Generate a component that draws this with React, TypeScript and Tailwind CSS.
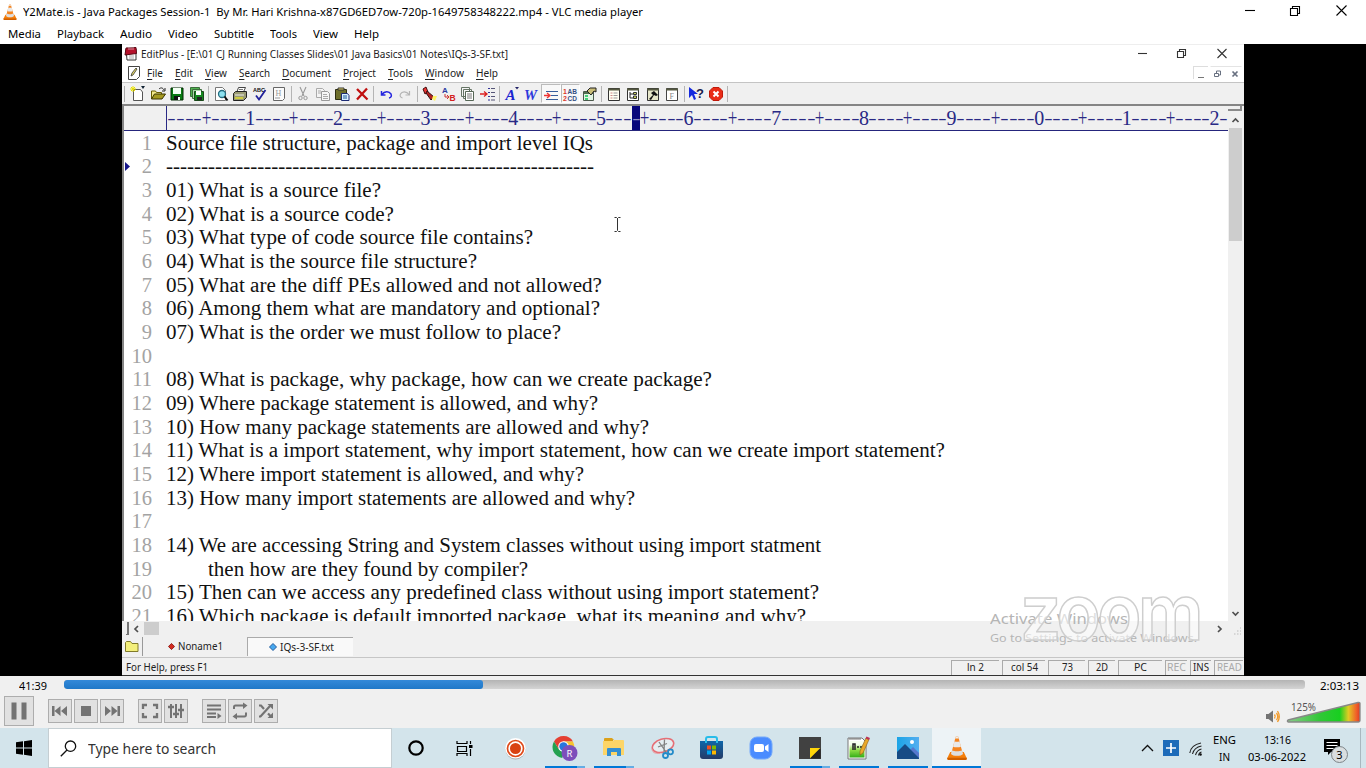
import React, { useLayoutEffect, useRef, useState } from 'react';

type Kids = { children?: React.ReactNode };

/* Single-line text condensed or expanded to a given width. */
function Fit({ w, className = '', children }: Kids & { w: number; className?: string }) {
  const ref = useRef<HTMLSpanElement>(null);
  const [scale, setScale] = useState(1);
  useLayoutEffect(() => {
    const el = ref.current;
    if (!el) return;
    el.style.transform = 'none';
    const natural = el.getBoundingClientRect().width;
    if (natural > 0) {
      setScale(w / natural);
      el.style.transform = `scaleX(${w / natural})`;
    }
  }, [w]);
  return (
    <span className={`block shrink-0 whitespace-pre ${className}`} style={{ width: w }}>
      <span ref={ref} className="inline-block origin-left" style={{ transform: `scaleX(${scale})` }}>
        {children}
      </span>
    </span>
  );
}

function Cone({ className }: { className: string }) {
  return (
    <svg viewBox="0 0 20 24" className={className}>
      <path d="M3.2 16h13.6l3 6.2c.2.8-.3 1.6-1.2 1.6H1.4C.5 23.800 0 23 .2 22.200z" fill="#f57f0a" />
      <path d="M.3 21.800h19.400v1.200c0 .5-.4.900-1 .9H1.400c-.6 0-1-.4-1-.9z" fill="#d05f00" />
      <path d="M8.700.8q1.300-.9 2.600 0L16 18.500c-2 2.400-10 2.400-12 0z" fill="#f48420" />
      <path d="M7.500 5.200l-1.500 5.200c2 1.200 6 1.200 8 0l-1.500-5.200c-1.400.7-3.600.7-5 0z" fill="#e9e9e9" />
      <path d="M4.900 14.200L4 17.900c2 2.600 10 2.600 12 0l-.9-3.700c-2.400 1.500-7.800 1.500-10.200 0z" fill="#dedede" />
      <path d="M8.700.8q1.300-.9 2.600 0l.5 1.700H8.200z" fill="#eee" />
    </svg>
  );
}

function WindowButtons({ small = false }: { small?: boolean }) {
  return (
    <svg width={small ? 92 : 104} height="13" viewBox={small ? '0 0 92 13' : '0 0 104 13'} fill="none" stroke={small ? '#333' : '#000'} strokeWidth="1.1" shapeRendering="geometricPrecision">
      <path d={small ? 'M1 6.500h9' : 'M1 6.500h10'} />
      {small ? (
        <>
          <path d="M40.500 4.500h6v6h-6zM42.500 4.500v-2h6v6h-2" />
          <path d="M80.500 2l9 9m0-9l-9 9" />
        </>
      ) : (
        <>
          <path d="M46.500 4.500h7v7h-7zM48.500 4.500v-2h7v7h-2" />
          <path d="M92.500 1.500l10 10m0-10l-10 10" />
        </>
      )}
    </svg>
  );
}

const menus: [string, number, number][] = [
  ['Media', 33, 8], ['Playback', 47, 16], ['Audio', 32, 16], ['Video', 30, 16],
  ['Subtitle', 40, 16], ['Tools', 27, 16], ['View', 25, 16], ['Help', 25, 16],
];

const editMenus: [string, number, number][] = [
  ['File', 16, 7], ['Edit', 18, 12], ['View', 22, 12], ['Search', 31, 12], ['Document', 49, 12],
  ['Project', 33, 12], ['Tools', 25, 12], ['Window', 39, 12], ['Help', 22, 12],
];

function Tool({ children, pressed = false }: Kids & { pressed?: boolean }) {
  return (
    <div className={`flex h-[19px] w-[19.5px] shrink-0 items-center justify-center ${pressed ? 'border border-[#bbb] border-r-white border-b-white bg-[#f8f8f8]' : ''}`}>
      <svg width="16" height="16" viewBox="0 0 16 16" fill="none" className="shrink-0 overflow-visible">{children}</svg>
    </div>
  );
}

function Sep() {
  return <div className="flex h-4 w-[4.500px] shrink-0 justify-center"><div className="w-px bg-[#b4b4b4]" /></div>;
}

const glyph = 'font-["Liberation_Sans"] font-bold';

function Toolbar() {
  return (
    <div className="flex h-[22px] shrink-0 items-center border-t border-[#c4c4c4] bg-[#f0f0f0]">
      <div className="ml-[2px] mr-[3.500px] h-4 w-px bg-[#aaa]" />
      <Tool>
        <path d="M3.500 3.500h7l2 2.500v8.500h-9z" fill="#fff" stroke="#555" />
        <path d="M3 0v6M0 3h6M1 1l4 4M5 1L1 5" stroke="#e8e000" />
        <path d="M11 0h4l-2 3z" fill="#123" />
      </Tool>
      <Tool>
        <path d="M1.500 13V5h4l1 1.500h5V9" fill="#f3e98b" stroke="#665b00" />
        <path d="M1.500 13l3-5h11l-3.500 5z" fill="#a59a20" stroke="#3b3500" />
        <path d="M9 3c2-2 4-1 5 1m1-2v3h-3" stroke="#222" />
      </Tool>
      <Tool>
        <path d="M2 2h12v12H2z" fill="#087a12" stroke="#002800" />
        <path d="M4 2h8v6H4z" fill="#f4fff4" /><path d="M5 10h6v4H5z" fill="#111" /><path d="M9 11h2v3H9z" fill="#fff" />
      </Tool>
      <Tool>
        <path d="M1.500 1.500h9v9h-9z" fill="#4fb24f" stroke="#3c6c3c" />
        <path d="M3.500 3.500h9v9h-9z" fill="#a8d8a8" stroke="#3c6c3c" />
        <path d="M5.500 5.500h9v9h-9z" fill="#168720" stroke="#1a481a" />
        <path d="M7 5h5v4H7z" fill="#fff" /><path d="M8 11h5v3H8z" fill="#222" />
      </Tool>
      <Sep />
      <Tool>
        <path d="M2.500 1.500h7l3 3v10h-10z" fill="#fff" stroke="#777" />
        <circle cx="9" cy="8" r="3.500" fill="#8de1ef" stroke="#246d80" strokeWidth="1.300" /><path d="M11.500 10.500l3 4" stroke="#111" strokeWidth="2" />
      </Tool>
      <Tool>
        <path d="M4.500 7l2-5.500h7L11 7" fill="#fff" stroke="#444" />
        <path d="M1.500 7.500l2-2h11v6l-3 3h-10z" fill="#999a72" stroke="#222" />
        <path d="M3 9h9" stroke="#eee" /><path d="M3 12h8" stroke="#e0dc30" strokeWidth="1.500" /><path d="M7 3.500h4" stroke="#777" />
      </Tool>
      <Tool>
        <text x="1" y="6" fontSize="5.500" fill="#111" className={glyph}>ABC</text>
        <path d="M4 9.500l3 4 6.500-9.500" stroke="#22229b" strokeWidth="1.800" />
      </Tool>
      <Tool>
        <path d="M2.500 1.500h11v11l-2 2h-9z" fill="#fbfbfb" stroke="#666" />
        <text x="4.500" y="10" fontSize="8" fill="#999" className='font-["Liberation_Serif"]'>H</text>
        <path d="M4 12h5" stroke="#999" />
      </Tool>
      <Sep />
      <Tool>
        <path d="M5 1l4 9M11 1L7 10" stroke="#999" strokeWidth="1.100" /><circle cx="5.500" cy="12" r="1.700" stroke="#999" /><circle cx="10.500" cy="12" r="1.700" stroke="#999" />
      </Tool>
      <Tool>
        <path d="M1.500 2.500h6l2 2v7h-8z" fill="#f4f4f4" stroke="#aaa" /><path d="M6.500 5.500h6l2 2v7h-8z" fill="#f7f7f7" stroke="#999" /><path d="M8 8.500h4M8 10.500h5M8 12.500h5M3 5h3M3 7h3" stroke="#aaa" />
      </Tool>
      <Tool>
        <path d="M1.500 3.500h11v10h-11z" fill="#6d6e2a" stroke="#2c2c10" /><path d="M4 4V2h6v2z" fill="#e5d860" stroke="#333" />
        <path d="M7.500 7.500h6l1.500 2v5H7.500z" fill="#d8efff" stroke="#1c2b75" /><path d="M9 10h4m-4 2h4" stroke="#1c5b95" />
      </Tool>
      <Tool><path d="M3 3l10.500 10.500M13 2.500L3 13.500" stroke="#c01010" strokeWidth="2.300" /></Tool>
      <Sep />
      <Tool><path d="M3.500 5v4H7.500M4 8.500c2.500-3.500 7-3.500 9-.5 1 2 0 3.500-2 4" stroke="#2525df" strokeWidth="1.500" /></Tool>
      <Tool><path d="M12.500 5v4H8.500M12 8.500C9.500 5 5 5 3.500 8c-1 2 0 3.500 2 4" stroke="#b5b5b5" strokeWidth="1.200" /></Tool>
      <Sep />
      <Tool>
        <path d="M2 3l3-2 2 5-3 2z" fill="#e33" stroke="#401010" /><path d="M6 5l7 6-3 3-5-7z" fill="#b32222" stroke="#331111" /><path d="M12 10h4l-2 5-3-2z" fill="#fff56a" />
      </Tool>
      <Tool>
        <text x="1" y="7" fontSize="8" fill="#2c3ca0" className={glyph}>A</text><text x="8.500" y="15" fontSize="8.500" fill="#d32020" className={glyph}>B</text><path d="M4 8v3h4M6 9l2 2-2 2" stroke="#c33" />
      </Tool>
      <Tool>
        <path d="M1.500 1.500h8v9h-8zM3.500 3.500h8v9h-8z" fill="#f4f4f4" stroke="#667566" /><path d="M5.500 5.500h8v9h-8z" fill="#fff" stroke="#556655" /><path d="M7 8h5m-5 2h5m-5 2h5" stroke="#777" />
      </Tool>
      <Tool>
        <path d="M0 8h6M4 5.500L7 8 4 10.500" stroke="#d22" strokeWidth="1.300" /><path d="M8 2.500h2M8 6.500h2M8 10.500h2M8 14h2" stroke="#339" strokeWidth="1.200" /><path d="M11 2.500h4m-4 4h4m-4 4h4m-4 3.500h4" stroke="#557" />
      </Tool>
      <Sep />
      <Tool><text x="1.500" y="14" fontSize="15" fill="#1b25d0" className='font-["Liberation_Serif"] font-bold italic'>A</text><path d="M11 1h4l-2 2.500z" fill="#226" /></Tool>
      <Tool><text x="1" y="13.500" fontSize="14" textLength="13" lengthAdjust="spacingAndGlyphs" fill="#2d38dc" className='font-["Liberation_Serif"] font-bold italic'>W</text></Tool>
      <Tool pressed><path d="M1 9.500h6M4 7l3 2.500L4 12" stroke="#e33" strokeWidth="1.300" /><path d="M3 5.500h12M8 9.500h7M3 13.500h12" stroke="#365d9c" strokeWidth="1.200" /></Tool>
      <Tool pressed>
        <text x="1" y="7.500" fontSize="7" fill="#db3a2a" className={glyph}>1</text><text x="1" y="14.500" fontSize="7" fill="#db3a2a" className={glyph}>2</text>
        <text x="5.500" y="7.500" fontSize="6.500" fill="#345083" className={glyph}>AB</text><text x="5.500" y="14.500" fontSize="6.500" fill="#345083" className={glyph}>CD</text>
      </Tool>
      <Tool><path d="M1.500 5.500h10v9h-10z" fill="#e3f5e3" stroke="#4b594b" /><path d="M2 6h9v2H2z" fill="#507050" /><path d="M3 9h3v2H3zm0 3h3v2H3z" fill="#47d179" /><path d="M5 5l3-3h6v4l-2-1-3 4-2-2z" fill="#c9bd77" stroke="#222" /></Tool>
      <Sep />
      <Tool><path d="M2.500 2.500h11v12h-11z" fill="#fffff2" stroke="#333" /><path d="M2 3.500h12" stroke="#555940" strokeWidth="2" /><path d="M4.500 7h2m-2 2.500h2m-2 2.500h2" stroke="#c88" /><path d="M7.500 7h4m-4 2.500h4m-4 2.500h4" stroke="#999" /></Tool>
      <Tool><path d="M2.500 2.500h11v12h-11z" fill="#fff" stroke="#333" /><path d="M2 3.500h12" stroke="#555940" strokeWidth="2" /><path d="M5 6v6h3M5 8h3" stroke="#222" /><path d="M8.500 6.500h3v2h-3zm0 3.500h3v2.500h-3z" fill="#ccd65d" stroke="#333" /></Tool>
      <Tool><path d="M2.500 2.500h11v12h-11z" fill="#e7e7c9" stroke="#333" /><path d="M2 3.500h12" stroke="#555940" strokeWidth="2" /><path d="M4 13l4-4-2-2 3-2 4 4-2 1-2-1-3 5z" fill="#111" /></Tool>
      <Tool><path d="M2.500 2.500h11v12h-11z" fill="#fff" stroke="#444" /><path d="M2 3.500h12" stroke="#555940" strokeWidth="2" /><text x="5.500" y="13" fontSize="8" fill="#888" className='font-["Liberation_Serif"]'>F</text></Tool>
      <Sep />
      <Tool><path d="M1 1v11l3-3 2 5 2-1-2-5h4z" fill="#1529de" /><text x="8" y="12" fontSize="13" fill="#18204c" className={glyph}>?</text></Tool>
      <Tool><path d="M5 1.500h6L14.500 5v6L11 14.500H5L1.500 11V5z" fill="#e92c17" stroke="#c01a0b" /><path d="M5.500 5.500l5 5m0-5l-5 5" stroke="#fff" strokeWidth="2" /></Tool>
      <Sep />
    </div>
  );
}

const rulerCells: string[] = Array.from({ length: 121 }, (_, i) => {
  const n = (i + 1) % 10;
  if (n === 0) return String(((i + 1) / 10) % 10);
  return n === 5 ? '+' : '-';
});

function rulerShape(c: string) {
  if (c === '-') return 'scale-x-[1.25] scale-y-[0.8]';
  if (c === '+') return 'scale-y-[1.3] scale-x-[0.85] origin-[50%_60%]';
  return '';
}

const lines: [string, number][] = [
  ['Source file structure, package and import level IQs', 427],
  ['-------------------------------------------------------------', 428],
  ['01) What is a source file?', 215],
  ['02) What is a source code?', 228],
  ['03) What type of code source file contains?', 367],
  ['04) What is the source file structure?', 311],
  ['05) What are the diff PEs allowed and not allowed?', 436],
  ['06) Among them what are mandatory and optional?', 434],
  ['07) What is the order we must follow to place?', 395],
  ['', 0],
  ['08) What is package, why package, how can we create package?', 546],
  ['09) Where package statement is allowed, and why?', 432],
  ['10) How many package statements are allowed and why?', 483],
  ['11) What is a import statement, why import statement, how can we create import statement?', 779],
  ['12) Where import statement is allowed, and why?', 418],
  ['13) How many import statements are allowed and why?', 469],
  ['', 0],
  ['14) We are accessing String and System classes without using import statment', 655],
  ['then how are they found by compiler?', 320],
  ['15) Then can we access any predefined class without using import statement?', 653],
  ['16) Which package is default imported package, what its meaning and why?', 640],
];

const status: [string, number, number, boolean][] = [
  ['ln 2', 48, 17, false], ['col 54', 43, 27, false], ['73', 37, 11, false], ['2D', 27, 12, false],
  ['PC', 44, 13, false], ['REC', 22, 19, true], ['INS', 21, 16, false], ['READ', 29, 25, true],
];

function Editor() {
  return (
    <div className='relative flex h-[632px] w-[1122px] shrink-0 flex-col overflow-hidden border-b border-[#333] bg-[#f0f0f0] font-["Noto_Sans",sans-serif] text-[10.500px] text-[#222]'>
      <div className="flex h-[19px] shrink-0 items-center border-t border-[#eee] bg-white pl-[2px]">
        <svg width="13" height="14" viewBox="0 0 13 14"><path d="M2 2h10v11H3z" fill="#fff" stroke="#333" /><path d="M2 1l10-.5.5 6L1 8z" fill="#b5122c" stroke="#5a0914" /><path d="M5 0v3m2-3v3m2-3v3" stroke="#eee" strokeWidth=".6" /><path d="M5 9h5m-5 2h5" stroke="#aaa" /></svg>
        <Fit w={367} className="ml-1 mt-px">EditPlus - [E:\01 CJ Running Classes Slides\01 Java Basics\01 Notes\IQs-3-SF.txt]</Fit>
        <div className="-mt-[2px] ml-auto mr-[15px]"><WindowButtons small /></div>
      </div>
      <div className="flex h-[19px] shrink-0 items-center bg-white pl-[6px]">
        <svg width="12" height="14" viewBox="0 0 12 14"><path d="M.5.500h11v10l-3 3h-8z" fill="#fff" stroke="#444" /><path d="M3 10l1-3 4-5 1 1-4 6z" fill="#e4d968" stroke="#333" strokeWidth=".8" /></svg>
        {editMenus.map(([m, w, gap]) => (
          <div key={m} className="mt-[2px] flex">
            <div style={{ width: gap }} />
            <Fit w={w}><span className="underline underline-offset-2">{m[0]}</span>{m.slice(1)}</Fit>
          </div>
        ))}
        <div className="ml-auto mr-px flex h-[13px]">
          <div className="flex w-[15px] items-end justify-center border-l border-t border-[#ddd]"><div className="mb-px h-[1.500px] w-[6px] bg-[#777]" /></div>
          <svg width="35" height="13" viewBox="0 0 35 13" fill="none" stroke="#687080"><path d="M2.500.500h31" stroke="#e4e4e4" /><path d="M6.500 7.500h4v3h-4zM8.500 7V5h4v4h-2" /><path d="M24.500 5.500l5 5m0-5l-5 5" strokeWidth="1.700" /></svg>
        </div>
      </div>
      <Toolbar />
      <div className="flex h-[517px] shrink-0 border-l-2 border-t-2 border-[#858585]">
        <div className="flex w-[1105px] shrink-0 flex-col bg-white">
          <div className='flex h-[25px] shrink-0 border-b border-[#25257c] bg-[#f0f0f0] font-["Liberation_Serif",serif] text-[20px] leading-[24px] text-[#292985]'>
            <div className="w-[43px] shrink-0 border-r border-[#292985]" />
            {rulerCells.map((c, i) => (
              <span key={i} className={`flex w-[8.775px] shrink-0 justify-center ${i === 53 ? 'bg-[#08087c] text-[#9090c8]' : ''}`}>
                <span className={`inline-block ${rulerShape(c)}`}>{c}</span>
              </span>
            ))}
          </div>
          <div className='h-[490px] overflow-hidden pt-[0.600px] font-["Liberation_Serif",serif] text-[20.500px] leading-[23.680px] text-[#111]'>
            {lines.map(([t, w], i) => (
              <div key={i} className="flex h-[23.680px]">
                <div className="flex w-[42px] shrink-0 items-center text-[#a3a3a3]">
                  <svg width="7" height="10" viewBox="0 0 7 10">{i === 1 && <path d="M1 0l5 4.500-5 4.500z" fill="#15158a" />}</svg>
                  <span className="w-[21px] text-right">{i + 1}</span>
                </div>
                <div className={i === 18 ? 'pl-[42px]' : ''}>{w > 0 && <Fit w={w}>{t}</Fit>}</div>
              </div>
            ))}
          </div>
        </div>
        <div className="-ml-px flex w-[15px] shrink-0 flex-col items-center bg-[#f0f0f0] pr-px">
          <div className="h-[5px] w-full border-b-2 border-r-2 border-[#8a8a8a]" />
          <svg className="h-[17px] w-[13px]" viewBox="0 0 13 17" fill="none" stroke="#505050" strokeWidth="1.700"><path d="M3.500 11l3-3 3 3" /></svg>
          <div className="h-[113px] w-[13px] bg-[#cdcdcd]" />
          <svg className="mt-auto h-[15px] w-[13px]" viewBox="0 0 13 15" fill="none" stroke="#505050" strokeWidth="1.700"><path d="M3.500 6l3 3 3-3" /></svg>
        </div>
      </div>
      <div className="flex h-[15px] shrink-0 items-center">
        <div className="ml-1 h-[13px] w-[3px] border-b border-r-2 border-[#777]" />
        <svg width="15" height="12" viewBox="0 0 15 12" fill="none" stroke="#505050" strokeWidth="1.700"><path d="M9 3L6 6l3 3" /></svg>
        <div className="h-[13px] w-[15px] bg-[#cdcdcd]" />
        <svg className="ml-auto" width="36" height="12" viewBox="0 0 36 12" fill="none" stroke="#505050" strokeWidth="1.700"><path d="M10 3l3 3-3 3" /><path d="M26 11h7M29 8h4M32 5h1" stroke="#bbb" strokeWidth="1.200" strokeDasharray="1.500 1.500" /></svg>
      </div>
      <div className="flex h-[22px] shrink-0 items-end border-b border-[#c6c6c6] pb-px">
        <div className="flex h-[19px] w-[21px] items-center justify-center border-r border-[#999]">
          <svg width="14" height="13" viewBox="0 0 14 13"><path d="M.5 11.500v-9l1-1h4l1.500 2h6v8z" fill="#f3ef7b" stroke="#817b2a" /></svg>
        </div>
        <div className="flex h-[19px] w-[104px] items-center pl-[25px]">
          <svg width="7" height="7" viewBox="0 0 8 8"><path d="M4 .5L7.500 4 4 7.500.5 4z" fill="#d32b20" stroke="#8b1711" /></svg>
          <Fit w={45} className="ml-[3px] mt-px">Noname1</Fit>
        </div>
        <div className="flex h-[19px] w-[106px] items-center border-l border-t border-[#aaa] bg-[#f9f9f9] pl-[21px]">
          <svg width="8" height="8" viewBox="0 0 8 8"><path d="M4 .5L7.500 4 4 7.500.5 4z" fill="#46a8ef" stroke="#225b9c" /></svg>
          <Fit w={54} className="ml-[3px] mt-px">IQs-3-SF.txt</Fit>
        </div>
      </div>
      <div className="flex min-h-0 flex-1 items-center pl-1 pr-px pt-[2px]">
        <Fit w={82}>For Help, press F1</Fit>
        <div className="ml-auto flex gap-[3px]">
          {status.map(([t, w, tw, dim]) => (
            <div key={t} style={{ width: w }} className={`flex h-[15px] items-center justify-center border-l border-t border-[#aaa] ${dim ? 'text-[#aaa]' : ''}`}><Fit w={tw}>{t}</Fit></div>
          ))}
        </div>
      </div>
      <svg className="absolute left-[491px] top-[172px]" width="9" height="17" viewBox="0 0 9 17" fill="none" stroke="#333"><path d="M1.500 1.500h2l1 1 1-1h2M4.500 2v12M1.500 15.500h2l1-1 1 1h2" /></svg>
      <div className="absolute left-[868px] top-[563px] text-[#b5b5b5]">
        <Fit w={138} className="h-[23px] text-[14.500px] leading-[23px]">Activate Windows</Fit>
        <Fit w={207} className="h-[16px] text-[11px] leading-[16px]">Go to Settings to activate Windows.</Fit>
      </div>
      <Fit w={180} className='absolute left-[898px] top-[525px] font-["Inter",sans-serif] text-[77px] leading-[87px] font-semibold tracking-[-4px] text-white/55 [-webkit-text-stroke:1.500px_#cecece]'>zoom</Fit>
    </div>
  );
}

function VBtn({ children, big = false, className = '' }: Kids & { big?: boolean; className?: string }) {
  return (
    <button className={`flex shrink-0 items-center justify-center border border-[#adadad] bg-[#e1e1e1] ${big ? 'h-[30px] w-[30px]' : 'h-6 w-6'} ${className}`}>
      <svg width="20" height="20" viewBox="0 0 20 20" fill="none" className="shrink-0">{children}</svg>
    </button>
  );
}

function Player() {
  return (
    <div className='flex h-[52px] shrink-0 flex-col bg-[#f0f0f0] font-["Noto_Sans",sans-serif] text-[11px] text-black'>
      <div className="flex h-[18px] items-center pl-[19px] pr-[7px]">
        <Fit w={28} className="mt-[3px]">41:39</Fit>
        <div className="-mt-px ml-[17px] flex h-[9px] w-[1241px] overflow-hidden rounded-[3px] bg-linear-to-b from-[#b4b4b4] to-[#d4d4d4]">
          <div className="w-[419px] rounded-[3px] bg-linear-to-b from-[#3389d9] to-[#1f78c8]" />
        </div>
        <Fit w={39} className="ml-auto mt-[3px]">2:03:13</Fit>
      </div>
      <div className="flex h-[34px] items-center pl-1">
        <VBtn big><path d="M2.500 1.500h5v17h-5zm10 0h5v17h-5z" fill="#737373" /></VBtn>
        <div className="ml-[14px] flex gap-[2px]">
          <VBtn><path d="M2 5h2.500v10H2zM4.500 10l6-5v10zm6.500 0l6-5v10z" fill="#737373" /></VBtn>
          <VBtn><path d="M5 5h10v10H5z" fill="#737373" /></VBtn>
          <VBtn><path d="M18 5h-2.500v10H18zM15.500 10l-6-5v10zM9 10L3 5v10z" fill="#737373" /></VBtn>
        </div>
        <div className="ml-[14px] flex gap-[2px]">
          <VBtn><path d="M3 8V4h4m6 0h4v4m0 4v4h-4m-6 0H3v-4" stroke="#737373" strokeWidth="2.300" /></VBtn>
          <VBtn><path d="M5 3v14M10 3v14M15 3v14" stroke="#737373" strokeWidth="2" /><path d="M2 6h6M7 13h6m-1-4h6" stroke="#737373" strokeWidth="2.500" /></VBtn>
        </div>
        <div className="ml-[14px] flex gap-[2px]">
          <VBtn><path d="M3 4.500h14M3 8.500h14M3 12.500h9M3 16h9" stroke="#737373" strokeWidth="2" /><path d="M13.500 12l4 3-4 3z" fill="#737373" /></VBtn>
          <VBtn><path d="M4 8V6q0-1.500 1.500-1.500H14M16 11.500v2q0 2-1.500 2H6" stroke="#737373" strokeWidth="2" /><path d="M13 1.500L17.500 4.500 13 8zM7 12l-4.500 3.500L7 18.500z" fill="#737373" /></VBtn>
          <VBtn><path d="M3 15.500h1.500L14 5M3 4.500h2l3 3.500m4 4.500l2.500 2.500" stroke="#737373" strokeWidth="2.200" /><path d="M11.500 3H17v5.500zM11.500 17H17v-5.500z" fill="#737373" /></VBtn>
        </div>
        <div className="ml-auto flex items-start pr-[5px]">
          <svg width="17" height="16" viewBox="0 0 17 16" fill="none" className="mt-[12px]"><path d="M1 5h2.500L8 1.500v12L3.500 10H1z" fill="#737373" /><path d="M9.500 5.500q1.500 2 0 4M11.500 4q2.500 3.500 0 7M12.500 2q3.500 5.500 0 11" stroke="#f39a28" strokeWidth="1.300" /></svg>
          <svg width="79" height="26" viewBox="0 0 79 26" className="mt-[3px] overflow-visible">
            <defs><linearGradient id="volume"><stop stopColor="#8ac98a" /><stop offset=".45" stopColor="#31c737" /><stop offset=".72" stopColor="#18cf20" /><stop offset=".84" stopColor="#e1cb24" /><stop offset=".95" stopColor="#f16029" /><stop offset="1" stopColor="#dd3a25" /></linearGradient></defs>
            <path d="M6 20L76 2.500q2-.5 2 1V20.500q0 1.500-1.500 1.500H6.500q-2-.5-.5-2z" fill="url(#volume)" stroke="#888" strokeWidth="1.300" />
            <text x="9" y="11" fontSize="10" textLength="25" lengthAdjust="spacingAndGlyphs" fill="#555">125%</text>
          </svg>
        </div>
      </div>
    </div>
  );
}

function App1({ children, state = 'idle' }: Kids & { state?: 'idle' | 'run' | 'multi' | 'active' }) {
  return (
    <div className={`flex h-10 w-[49px] shrink-0 flex-col items-center ${state === 'active' ? 'bg-[#edf3f6]' : ''}`}>
      <div className="flex h-[38px] items-center justify-center pt-[2px]">{children}</div>
      {state !== 'idle' && (
        <div className={`flex h-[2px] bg-[#0078d7] ${state === 'active' ? 'w-full' : 'w-10'}`}>
          {state === 'multi' && <div className="ml-auto w-2 bg-[#64ade4]" />}
        </div>
      )}
    </div>
  );
}

function Taskbar() {
  return (
    <div className='flex h-10 shrink-0 bg-[#d3e4eb] font-["Noto_Sans",sans-serif] text-[11.500px] text-black'>
      <div className="flex w-12 items-center justify-center">
        <svg width="16" height="16" viewBox="0 0 16 16"><path d="M0 2.300l7-1v6.200H0zM8 1.200L16 0v7.500H8zM0 8.500h7v6.200l-7-1zm8 0h8V16l-8-1.200z" /></svg>
      </div>
      <div className="flex w-[344px] items-center border border-[#c5ced2] bg-white pl-[11px]">
        <svg width="17" height="17" viewBox="0 0 17 17" fill="none" stroke="#111" strokeWidth="1.300"><circle cx="10.500" cy="6.200" r="5.200" /><path d="M7 10l-6.200 6.200" /></svg>
        <Fit w={128} className="ml-[11px] mt-px text-[14.500px] text-[#333]">Type here to search</Fit>
      </div>
      <div className="flex w-12 items-center justify-center"><svg width="16" height="16" viewBox="0 0 16 16"><circle cx="8" cy="8" r="6.700" fill="none" stroke="#000" strokeWidth="2.200" /></svg></div>
      <div className="mr-[3px] flex w-12 items-center justify-center">
        <svg width="17" height="16" viewBox="0 0 17 16" fill="none" stroke="#000" strokeWidth="1.200"><path d="M1 1v2.500h10V1M1.500 6.500h9v5h-9zM1 16v-2.500h10V16M14.500 1v3M14.500 9v7" /><path d="M13 5h3.500v3H13z" fill="#000" stroke="none" /></svg>
      </div>
      <App1><svg width="23" height="23" viewBox="0 0 23 23"><circle cx="11.500" cy="12.500" r="10" fill="#a7b0b4" /><circle cx="11.500" cy="11.200" r="10.300" fill="#fff" /><circle cx="11.500" cy="11.500" r="8" fill="none" stroke="#df4b1b" strokeWidth="1.700" /><circle cx="11.500" cy="11.500" r="5.500" fill="#d94212" /></svg></App1>
      <App1 state="multi">
        <svg width="26" height="26" viewBox="0 0 26 26">
          <path d="M11.500 1A10.700 10.700 0 0 1 21 6.500H11.500L6.800 14.200 2 6.500A11 11 0 0 1 11.500 1z" fill="#e44032" />
          <path d="M2 6.500l4.800 7.700 5 2.500-1.500 6.300A11 11 0 0 1 2 6.500z" fill="#24a150" />
          <path d="M11.500 6.500H21q4 8-3 14l-6 2 4-8z" fill="#f7c32e" />
          <circle cx="11.500" cy="11.500" r="5.300" fill="#fff" /><circle cx="11.500" cy="11.500" r="4.200" fill="#2876de" />
          <circle cx="17.500" cy="18" r="8" fill="#7d4fbb" /><text x="17.500" y="21.500" fontSize="9.500" textAnchor="middle" fill="#fff">R</text>
        </svg>
      </App1>
      <App1 state="multi"><svg width="22" height="20" viewBox="0 0 22 20"><path d="M1 1q0-1 1-1h7l2 2h-1v5H1z" fill="#dca119" /><path d="M0 3h10l1-1h9q1 0 1 1v14H0z" fill="#fdd567" /><path d="M4 18v-7q0-1 1-1h12q1 0 1 1v7h-4v-4H8v4z" fill="#348fd2" /></svg></App1>
      <App1><svg width="25" height="24" viewBox="0 0 25 24" fill="none"><ellipse cx="13" cy="9.500" rx="11" ry="6.500" transform="rotate(-17 13 9.500)" fill="#e6eef1" stroke="#e66f76" strokeWidth="1.600" /><path d="M2 13q0 5 8 4.500" stroke="#e8a0a5" /><path d="M9 6l7 10M14.500 3.500l-.5 12M8 11l9-3.500" stroke="#808080" strokeWidth="1.300" /><circle cx="15.500" cy="19.500" r="2.500" stroke="#238bc9" strokeWidth="1.800" /><circle cx="20.500" cy="15.800" r="2.500" stroke="#238bc9" strokeWidth="1.800" /></svg></App1>
      <App1><svg width="23" height="24" viewBox="0 0 23 24"><defs><linearGradient id="bag" x2="0" y2="1"><stop stopColor="#0f66a9" /><stop offset="1" stopColor="#243b67" /></linearGradient></defs><path d="M0 5h23v15q0 3-3 3H3q-3 0-3-3z" fill="url(#bag)" /><path d="M6 7V3q0-2 2-2h7q2 0 2 2v4" fill="none" stroke="#28bce9" strokeWidth="2" /><path d="M7 9.500h4v4H7z" fill="#f25022" /><path d="M12 9.500h4v4h-4z" fill="#7fba00" /><path d="M7 14.500h4v4H7z" fill="#00a4ef" /><path d="M12 14.500h4v4h-4z" fill="#ffb900" /></svg></App1>
      <App1><svg width="24" height="24" viewBox="0 0 24 24"><rect x="1" y="1" width="22" height="22" rx="7" fill="#4a8cff" stroke="#72a8fb" /><rect x="5" y="8" width="10" height="8" rx="2" fill="#fff" /><path d="M16 10.500L19.500 8v8L16 13.500z" fill="#fff" /></svg></App1>
      <App1 state="multi"><svg width="22" height="22" viewBox="0 0 22 22"><path d="M0 0h22v22H0z" fill="#414141" /><path d="M11 11h10.500L11 21.500z" fill="#ffd60a" /><path d="M11 21.500L21.500 11v10.500z" fill="#252525" /></svg></App1>
      <App1 state="run">
        <svg width="23" height="24" viewBox="0 0 23 24"><defs><linearGradient id="note" x2="0" y2="1"><stop offset=".2" stopColor="#f6fff0" /><stop offset=".55" stopColor="#8ddd45" /><stop offset="1" stopColor="#33ad17" /></linearGradient></defs><path d="M1 2h14l4 4v17H1z" fill="#fff" stroke="#777" /><path d="M2.500 5h15v16.500h-15z" fill="url(#note)" /><path d="M3 2v2m2-2v2m2-2v2m2-2v2m2-2v2m2-2v2" stroke="#555" strokeWidth=".8" /><path d="M6 14V8h2v6M10 11h2m1 0h2" stroke="#222" strokeWidth="1.500" fill="none" /><path d="M19 2l3 1.500L16 17l-3 2v-4z" fill="#e9a92a" stroke="#8b5b17" strokeWidth=".6" /><path d="M19.500.500L23 2l-1 2-3.500-1.500z" fill="#b35" /></svg>
      </App1>
      <App1 state="run"><svg width="22" height="22" viewBox="0 0 22 22"><defs><linearGradient id="sky"><stop stopColor="#1ba4e6" /><stop offset="1" stopColor="#53aef0" /></linearGradient></defs><path d="M0 0h22v22H0z" fill="url(#sky)" /><path d="M12 14l4-4 6 6v6h-5z" fill="#5778cd" /><path d="M0 15l8-8 14 14v1H0z" fill="#174b85" /><circle cx="15" cy="5" r="2" fill="#fff" /></svg></App1>
      <App1 state="active"><Cone className="h-6 w-5" /></App1>
      <div className="ml-auto flex items-center">
        <svg width="13" height="8" viewBox="0 0 13 8" fill="none" stroke="#111" strokeWidth="1.300"><path d="M1 7l5.500-5.500L12 7" /></svg>
        <svg className="ml-[9px]" width="16" height="16" viewBox="0 0 16 16"><path d="M0 0h16v16H0z" fill="#1d6bb9" /><path d="M8 3v10M3 8h10" stroke="#fff" strokeWidth="1.700" /></svg>
        <svg className="ml-[10px] mt-[2px]" width="14" height="14" viewBox="0 0 14 14" fill="none" stroke="#222" strokeWidth="1.100"><path d="M.8 11Q2 3 12 1M3.500 12Q5 5.500 12.500 4M6.500 13Q8 8 12.500 7M9.500 13.500Q10 10.500 12.500 10" /><circle cx="11.500" cy="12.500" r="1.300" fill="#111" stroke="none" /></svg>
        <div className="ml-[9px] flex h-10 w-[24px] flex-col items-center justify-center leading-[17px]"><Fit w={23}>ENG</Fit><Fit w={11}>IN</Fit></div>
        <div className="ml-[12px] flex h-10 w-[58px] flex-col items-center justify-center leading-[17px]"><Fit w={27}>13:16</Fit><Fit w={58}>03-06-2022</Fit></div>
        <svg className="ml-[17px] mt-[5px]" width="26" height="26" viewBox="0 0 26 26"><path d="M1 1h16v13H8l-3 3v-3H1z" /><path d="M3.500 4.500h11m-11 3h11m-11 3h7" stroke="#fff" strokeWidth="1.200" /><circle cx="16.500" cy="16.500" r="8" fill="#d9dee0" stroke="#7e8588" /><text x="16.500" y="20.500" fontSize="11" textAnchor="middle">3</text></svg>
        <div className="ml-[11px] h-10 w-px bg-[#a8b8bf]" />
        <div className="w-[5px]" />
      </div>
    </div>
  );
}

export default function App() {
  return (
    <div className='flex h-[768px] w-[1366px] flex-col overflow-hidden bg-white font-["Noto_Sans",sans-serif] text-black'>
      <div className="flex h-6 shrink-0 items-center pl-[3px] text-[11.500px]">
        <Cone className="h-4 w-[14px]" />
        <Fit w={620} className="ml-[6px]">Y2Mate.is - Java Packages Session-1  By Mr. Hari Krishna-x87GD6ED7ow-720p-1649758348222.mp4 - VLC media player</Fit>
        <div className="ml-auto mr-[18px] -mt-[3px]"><WindowButtons /></div>
      </div>
      <div className="flex h-5 shrink-0 items-center text-[11.500px]">
        {menus.map(([m, w, gap]) => (
          <div key={m} className="flex"><div style={{ width: gap }} /><Fit w={w}>{m}</Fit></div>
        ))}
      </div>
      <div className="flex h-[632px] shrink-0 bg-black pl-[122px]"><Editor /></div>
      <Player />
      <Taskbar />
    </div>
  );
}
